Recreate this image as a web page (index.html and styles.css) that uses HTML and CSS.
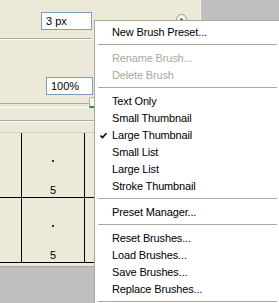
FILE: index.html
```html
<!DOCTYPE html>
<html lang="en">
<head>
  <meta charset="UTF-8">
  <title>Brushes</title>
  <link rel="stylesheet" href="styles.css">
</head>
<body>
  <div class="screen">
    <div class="panel">
      <div class="size-row">
        <div class="field">3 px</div>
        <div class="menu-btn">
          <svg width="10" height="10" viewBox="0 0 10 10"><path d="M4 2.5 L7 5 L4 7.5 Z" fill="#222"/></svg>
        </div>
      </div>
      <div class="rule"></div>

      <div class="opacity-row">
        <div class="field">100%</div>
      </div>
      <div class="slider">
        <div class="track"></div>
        <div class="thumb"></div>
      </div>
      <div class="rule long"></div>

      <!-- brush thumbnails, only the middle column is fully in view -->
      <div class="list">
        <div class="cells">
          <div class="cell"></div>
          <div class="cell"><span class="dot"></span><span class="num">5</span></div>
          <div class="cell"></div>
          <div class="cell"></div>
          <div class="cell"><span class="dot"></span><span class="num">5</span></div>
          <div class="cell"></div>
        </div>
      </div>
    </div>
  </div>

  <!-- panel flyout menu -->
  <div class="menu">
    <div class="item">New Brush Preset...</div>
    <div class="sep"></div>
    <div class="item disabled">Rename Brush...</div>
    <div class="item disabled">Delete Brush</div>
    <div class="sep"></div>
    <div class="item">Text Only</div>
    <div class="item">Small Thumbnail</div>
    <div class="item checked">
      <svg class="check" width="7" height="7" viewBox="0 0 7 7"><path d="M0.5 3.5 L2.5 5.5 L6.5 1.2" fill="none" stroke="#000" stroke-width="1.6"/></svg>
      Large Thumbnail
    </div>
    <div class="item">Small List</div>
    <div class="item">Large List</div>
    <div class="item">Stroke Thumbnail</div>
    <div class="sep"></div>
    <div class="item">Preset Manager...</div>
    <div class="sep"></div>
    <div class="item">Reset Brushes...</div>
    <div class="item">Load Brushes...</div>
    <div class="item">Save Brushes...</div>
    <div class="item">Replace Brushes...</div>
    <div class="sep"></div>
  </div>
</body>
</html>
```

FILE: styles.css
```css
* { margin: 0; padding: 0; box-sizing: border-box; }
body {
  width: 279px;
  height: 303px;
  overflow: hidden;
  background-color: #bfbfbf;
  font-family: "Liberation Sans", Arial, sans-serif;
  font-size: 11px;
  color: #000;
  position: relative;
}
.screen {
  display: flex;
}
.panel {
  width: 201px;
  height: 267px;
  background-color: #ece9d8;
  border-right: 1px solid #f7f6f0;
  border-bottom: 1px solid #aca899;
  display: flex;
  flex-direction: column;
  overflow: hidden;
}
.size-row {
  height: 38px;
  display: flex;
  align-items: flex-start;
  padding: 12px 0 0 41px;
}
.field {
  width: 51px;
  height: 18px;
  border: 1px solid #7f9db9;
  background-color: #fff;
  padding-left: 4px;
  line-height: 16px;
}
.menu-btn {
  margin-left: auto;
  margin-right: 13px;
  margin-top: 2px;
  width: 11px;
  height: 11px;
  border-radius: 50%;
  border: 1px solid #9a9a90;
  background-color: #f4f3ee;
  display: flex;
  align-items: center;
  justify-content: center;
}
.rule {
  width: 91px;
  border-top: 1px solid #aca899;
  border-bottom: 1px solid #fff;
}
.rule.long {
  width: 100%;
  margin-top: 9px;
}
.opacity-row {
  padding: 37px 0 0 46px;
}
.opacity-row .field {
  width: 47px;
}
.slider {
  display: flex;
  align-items: flex-start;
  margin-top: 2px;
  height: 14px;
}
.track {
  width: 89px;
  height: 5px;
  margin-top: 6px;
  border-top: 1px solid #aca899;
  border-bottom: 1px solid #fff;
}
.thumb {
  width: 6px;
  height: 11px;
  background-color: #f7f7f4;
  border: 1px solid #b0ae9e;
  border-bottom: 2px solid #21a121;
  border-radius: 2px 2px 0 0;
}
.list {
  margin-top: 10px;
  flex: 1;
  border-top: 1px solid #d6d3c2;
  overflow: hidden;
}
.cells {
  margin-left: -42px;
  display: grid;
  grid-template-columns: repeat(3, 63px);
  grid-auto-rows: 65px;
}
.cell {
  border-left: 1px solid #000;
  border-bottom: 1px solid #000;
  display: flex;
  flex-direction: column;
  align-items: center;
}
.dot {
  width: 2px;
  height: 2px;
  background-color: #333;
  margin-top: 27px;
}
.num {
  margin-top: 22px;
  line-height: 12px;
}

/* flyout menu */
.menu {
  position: absolute;
  left: 94px;
  top: 20px;
  width: 187px;
  background-color: #fff;
  border: 1px solid #aca899;
  padding: 3px 0;
  letter-spacing: -0.15px;
}
.item {
  height: 17px;
  line-height: 17px;
  padding-left: 17px;
  position: relative;
  white-space: nowrap;
}
.item.disabled {
  color: #aca899;
}
.check {
  position: absolute;
  left: 5px;
  top: 5px;
}
.sep {
  height: 9px;
  margin: 0 3px;
  padding-top: 3px;
}
.sep::before {
  content: "";
  display: block;
  border-top: 1px solid #aca899;
}
```
